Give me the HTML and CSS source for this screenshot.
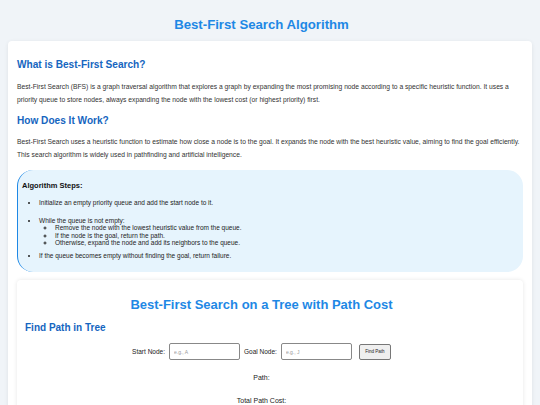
FILE: index.html
```html
<!DOCTYPE html>
<html lang="en">
<head>
<meta charset="utf-8">
<title>Best-First Search Algorithm</title>
<link rel="stylesheet" href="styles.css">
</head>
<body>
<h1 class="page-title">Best-First Search Algorithm</h1>
<div class="container">
  <h2 class="section-title">What is Best-First Search?</h2>
  <p class="text">Best-First Search (BFS) is a graph traversal algorithm that explores a graph by expanding the most promising node according to a specific heuristic function. It uses a priority queue to store nodes, always expanding the node with the lowest cost (or highest priority) first.</p>
  <h2 class="section-title">How Does It Work?</h2>
  <p class="text">Best-First Search uses a heuristic function to estimate how close a node is to the goal. It expands the node with the best heuristic value, aiming to find the goal efficiently. This search algorithm is widely used in pathfinding and artificial intelligence.</p>
  <div class="steps">
    <h3 class="steps-title">Algorithm Steps:</h3>
    <ul class="steps-list">
      <li class="step">Initialize an empty priority queue and add the start node to it.</li>
      <li class="step step-nested">While the queue is not empty:
        <ul class="sub-list">
          <li>Remove the node with the lowest heuristic value from the queue.</li>
          <li>If the node is the goal, return the path.</li>
          <li>Otherwise, expand the node and add its neighbors to the queue.</li>
        </ul>
      </li>
      <li class="step step-last">If the queue becomes empty without finding the goal, return failure.</li>
    </ul>
  </div>
  <div class="card">
    <h2 class="card-title">Best-First Search on a Tree with Path Cost</h2>
    <h3 class="card-subtitle">Find Path in Tree</h3>
    <div class="form-row">
      <label class="field-label" for="start">Start Node:</label>
      <input class="field-input" id="start" type="text" placeholder="e.g., A">
      <label class="field-label" for="goal">Goal Node:</label>
      <input class="field-input" id="goal" type="text" placeholder="e.g., J">
      <button class="find-btn" type="button">Find Path</button>
    </div>
    <p class="result">Path: </p>
    <p class="result">Total Path Cost: </p>
  </div>
</div>
</body>
</html>
```
FILE: styles.css
```css
* { box-sizing: border-box; }
html, body { margin: 0; }
body {
  padding: 0 8px;
  background: #f0f4f8;
  font-family: "Liberation Sans", Arial, sans-serif;
  color: #333;
}
.page-title {
  margin: 0 0 7px;
  padding: 16px 17px 0 0;
  font-size: 13.2px;
  line-height: 18px;
  text-align: center;
  color: #1e88e5;
}
.container {
  background: #fff;
  border-radius: 4px;
  padding: 17px 9px 20px;
  box-shadow: 0 1px 4px rgba(0,0,0,0.08);
}
.section-title {
  margin: 0;
  font-size: 10.1px;
  line-height: 13px;
  color: #1565c0;
}
.text {
  margin: 8.5px 0 8px;
  font-size: 6.72px;
  line-height: 13px;
  color: #333;
}
.steps {
  margin-top: 8.5px;
  background: #e6f4fd;
  border-left: 1.5px solid #1e88e5;
  border-radius: 16px;
  padding: 11px 4px 13px;
}
.steps-title {
  margin: 0;
  font-size: 7.5px;
  line-height: 10px;
  color: #111;
}
.steps-list {
  margin: 8px 0 0;
  padding-left: 17px;
  font-size: 6.5px;
  line-height: 7.5px;
  color: #222;
}
.step { margin-bottom: 10.5px; }
.step-nested { margin-bottom: 5px; }
.step-last { margin-bottom: 0; }
.sub-list {
  margin: 0;
  padding-left: 16px;
  list-style: circle;
}
.card {
  margin-top: 8px;
  background: #fff;
  border-radius: 4px;
  padding: 16px 25px 20px 8px;
  box-shadow: 0 0 4px rgba(0,0,0,0.1);
}
.card-title {
  margin: 0;
  font-size: 13px;
  line-height: 18px;
  text-align: center;
  color: #1e88e5;
}
.card-subtitle {
  margin: 8px 0 0;
  font-size: 10px;
  line-height: 12px;
  color: #1565c0;
}
.form-row {
  display: flex;
  justify-content: center;
  align-items: center;
  gap: 4px;
  margin-top: 9px;
}
.field-label {
  font-size: 6.5px;
  color: #222;
}
.field-input {
  width: 71px;
  height: 17px;
  padding: 0 4px;
  border: 1px solid #888;
  border-radius: 2px;
  font-family: inherit;
  font-size: 5px;
}
.field-input::placeholder { color: #999; }
.find-btn {
  margin-left: 3px;
  width: 32px;
  height: 16px;
  padding: 0;
  background: #efefef;
  border: 1px solid #777;
  border-radius: 2px;
  font-family: inherit;
  font-size: 4.5px;
  color: #222;
}
.result {
  margin: 13px 0 0;
  font-size: 7px;
  line-height: 10px;
  text-align: center;
  color: #222;
}
```
